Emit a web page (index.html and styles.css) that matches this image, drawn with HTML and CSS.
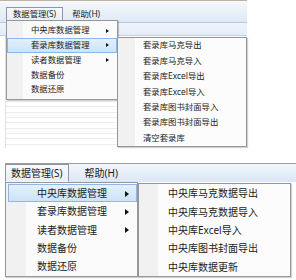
FILE: index.html
```html
<!DOCTYPE html>
<html>
<head>
<meta charset="utf-8">
<link rel="stylesheet" href="styles.css">
</head>
<body>
<div class="win win1">
  <div class="frame"></div>
  <div class="menubar mb1">
    <div class="mitem pressed">数据管理(S)</div>
    <div class="mitem">帮助(H)</div>
  </div>
  <div class="toolband"></div>
  <div class="grid"></div>

  <div class="menu m1-drop">
    <div class="row">中央库数据管理<span class="arrow"></span></div>
    <div class="row hl">套录库数据管理<span class="arrow"></span></div>
    <div class="row">读者数据管理<span class="arrow"></span></div>
    <div class="row">数据备份</div>
    <div class="row">数据还原</div>
  </div>
  <div class="menu m1-sub">
    <div class="row">套录库马克导出</div>
    <div class="row">套录库马克导入</div>
    <div class="row">套录库Excel导出</div>
    <div class="row">套录库Excel导入</div>
    <div class="row">套录库图书封面导入</div>
    <div class="row">套录库图书封面导出</div>
    <div class="row">清空套录库</div>
  </div>
</div>

<div class="win win2">
  <div class="menubar mb2">
    <div class="mitem pressed">数据管理(S)</div>
    <div class="mitem">帮助(H)</div>
  </div>

  <div class="menu m2-drop">
    <div class="row hl">中央库数据管理<span class="arrow"></span></div>
    <div class="row">套录库数据管理<span class="arrow"></span></div>
    <div class="row">读者数据管理<span class="arrow"></span></div>
    <div class="row">数据备份</div>
    <div class="row">数据还原</div>
  </div>
  <div class="menu m2-sub">
    <div class="row">中央库马克数据导出</div>
    <div class="row">中央库马克数据导入</div>
    <div class="row">中央库Excel导入</div>
    <div class="row">中央库图书封面导出</div>
    <div class="row">中央库数据更新</div>
  </div>
</div>
</body>
</html>
```

FILE: styles.css
```css
* { box-sizing: border-box; margin: 0; padding: 0; }
html, body { background: #fff; }
body {
  width: 296px;
  height: 280px;
  overflow: hidden;
  font-family: "Noto Sans", "Noto Sans CJK SC", sans-serif;
  color: #1b1b1b;
}

.win { position: relative; }

/* ---------- top screenshot ---------- */
.win1 {
  width: 247px;
  height: 149px;
  margin-bottom: 14px;
  display: flex;
  flex-direction: column;
  font-size: 8.4px;
}
.frame { height: 1px; background: #bfb2a2; }
.mb1 {
  height: 22px;
  padding: 6px 0 0 6px;
  background: linear-gradient(#f6f9fd, #dee8f5);
  border-bottom: 1px solid #b7c9e0;
  gap: 2px;
}
.mb1 .mitem { height: 14px; padding: 0 6px; }
.toolband {
  height: 13px;
  background: linear-gradient(#eef4fc, #e3ecf8);
  border-bottom: 1px solid #c8d0da;
}
.grid {
  flex: 1;
  margin-left: 5px;
  margin-bottom: 1px;
  border-left: 1px solid #e0e0e0;
  background: repeating-linear-gradient(to bottom, #fff 0 4.33px, #eeeeee 4.33px 5.33px);
  background-position: 0 2px;
}

/* ---------- bottom screenshot ---------- */
.win2 {
  margin-left: 5px;
  width: 291px;
  height: 117px;
  border-top: 1px solid #9c9c9c;
  font-size: 10px;
}
.mb2 {
  height: 18px;
  background: linear-gradient(#f2f7fd, #dbe7f5);
  gap: 10px;
}
.mb2 .mitem { height: 18px; padding: 0 5px; }

/* ---------- menubar items ---------- */
.menubar { display: flex; align-items: flex-start; }
.mitem {
  display: flex;
  align-items: center;
  white-space: nowrap;
  border: 1px solid transparent;
  line-height: 1;
}
.mitem.pressed {
  border-color: #8d97a5;
  border-bottom-color: transparent;
  background: linear-gradient(#f7f9fc, #e9eef5);
}

/* ---------- menus ---------- */
.menu {
  position: absolute;
  border: 1px solid #979797;
  box-shadow: 1px 1px 1px rgba(0, 0, 0, 0.18);
  display: flex;
  flex-direction: column;
}
.row {
  position: relative;
  display: flex;
  align-items: center;
  white-space: nowrap;
  line-height: 1;
  border: 1px solid transparent;
}
.row.hl {
  border-color: #8db8e6;
  background: linear-gradient(#e4f0fc, #cde3f8);
}
.arrow {
  position: absolute;
  width: 0;
  height: 0;
  border-style: solid;
  border-color: transparent transparent transparent #111;
}

.m1-drop {
  left: 6px; top: 20px; width: 112px; height: 80px;
  padding: 2px 0;
  background: linear-gradient(to right, #f1f1f1 0 16px, #fbfbfb 16px);
}
.m1-drop .row { height: 15.3px; padding-left: 23px; }
.m1-drop .arrow { right: 7px; top: 4.5px; border-width: 2.5px 0 2.5px 3px; }

.m1-sub {
  left: 117px; top: 37px; width: 130px; height: 110px;
  background: linear-gradient(to right, #f1f1f1 0 17px, #fcfcfc 17px);
}
.m1-sub .row { height: 15.4px; padding-left: 24px; }

.m2-drop {
  left: 0; top: 18px; width: 133px; height: 95px;
  padding: 1px 0;
  background: linear-gradient(to right, #f1f1f1 0 20px, #fbfbfb 20px);
}
.m2-drop .row { height: 18.3px; padding-left: 28px; margin-left: 2px; }
.m2-drop .arrow { right: 7px; top: 5.5px; border-width: 3px 0 3px 4px; }

.m2-sub {
  left: 133px; top: 19px; width: 153px; height: 94px;
  background: linear-gradient(to right, #f1f1f1 0 19px, #fcfcfc 19px);
}
.m2-sub .row { height: 18.4px; padding-left: 28px; }
```
